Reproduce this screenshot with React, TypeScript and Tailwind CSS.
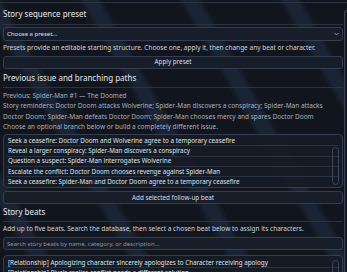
import React from 'react'

const followUps = [
  'Seek a ceasefire: Doctor Doom and Wolverine agree to a temporary ceasefire',
  'Reveal a larger conspiracy: Spider-Man discovers a conspiracy',
  'Question a suspect: Spider-Man interrogates Wolverine',
  'Escalate the conflict: Doctor Doom chooses revenge against Spider-Man',
  'Seek a ceasefire: Spider-Man and Doctor Doom agree to a temporary ceasefire'
]

function Heading({ children }: { children: React.ReactNode }) {
  return (
    <div className="flex h-[19px] items-center border-b border-[#2b3343] text-[8px] text-[#e4e7ee]">
      {children}
    </div>
  )
}

function Button({ children }: { children: React.ReactNode }) {
  return (
    <button className="flex h-[13px] w-full items-center justify-center rounded-[3px] border border-[#343e50] bg-[#181e2a]/95 text-[6.3px] text-[#d8dce4]">
      {children}
    </button>
  )
}

function ScrollPill({ className }: { className: string }) {
  return <div className={`absolute right-[3px] w-[7px] rounded-full border border-[#3d4759] ${className}`} />
}

export default function App() {
  return (
    <div className="h-[272px] w-[347px] overflow-hidden bg-[repeating-linear-gradient(60deg,#11151d_0px,#11151d_30px,#1a2435_36px,#1a2435_46px,#11151d_52px,#11151d_86.6px)] font-['Noto_Sans',sans-serif] leading-none">
      <div className="h-[3px] border-b border-[#2b3343]" />
      <div className="flex">
        <main className="ml-[3px] w-[340px]">
          <div className="flex h-[22px] items-center border-b border-[#2b3343] text-[8px] text-[#e4e7ee]">
            Story sequence preset
          </div>

          <div className="mt-[2px] flex h-[14px] items-center justify-between rounded-[3px] border border-[#343e50] bg-[#181e2a]/95 px-[3px] text-[6px] text-[#dde1e8]">
            <span>Choose a preset...</span>
            <svg width="5" height="4" viewBox="0 0 5 4" className="text-[#aab2c0]">
              <path d="M0.5 1 L2.5 3 L4.5 1" fill="none" stroke="currentColor" strokeWidth="0.8" />
            </svg>
          </div>

          <p className="flex h-[15px] items-center text-[6.5px] text-[#cfd4dc]">
            Presets provide an editable starting structure. Choose one, apply it, then change any beat or character.
          </p>

          <Button>Apply preset</Button>

          <Heading>Previous issue and branching paths</Heading>

          <div className="pt-[3px] text-[6.5px] leading-[10.3px] text-[#a9b0bc]">
            <p>Previous: Spider-Man #1 — The Doomed</p>
            <p>
              Story reminders: Doctor Doom attacks Wolverine; Spider-Man discovers a conspiracy; Spider-Man attacks
              Doctor Doom; Spider-Man defeats Doctor Doom; Spider-Man chooses mercy and spares Doctor Doom
            </p>
            <p>Choose an optional branch below or build a completely different issue.</p>
          </div>

          <div className="relative mt-[2px] h-[54px] overflow-hidden rounded-[4px] border border-[#343e50] bg-[#161b26]/95 px-[3px] pt-[1px]">
            {followUps.map((item) => (
              <div
                key={item}
                className="flex h-[10.3px] items-center border-b border-[#2a3242] pl-[1px] text-[6.3px] text-[#dfe3ea]"
              >
                {item}
              </div>
            ))}
            <ScrollPill className="top-[12px] h-[38px]" />
          </div>

          <div className="mt-[3px]">
            <Button>Add selected follow-up beat</Button>
          </div>

          <div className="mt-[-1px]">
            <Heading>Story beats</Heading>
          </div>

          <p className="flex h-[15px] items-center text-[6.5px] text-[#cfd4dc]">
            Add up to five beats. Search the database, then select a chosen beat below to assign its characters.
          </p>

          <div className="flex h-[13px] items-center rounded-[3px] border border-[#343e50] bg-[#181e2a]/95 px-[3px] text-[6px] text-[#8d95a3]">
            Search story beats by name, category, or description...
          </div>

          <div className="relative mt-[5px] h-[40px] overflow-hidden rounded-[4px] border border-[#343e50] bg-[#161b26]/95 px-[3px] pt-[2px]">
            <div className="flex h-[10.3px] items-center border-b border-[#2a3242] pl-[1px] text-[6.3px] text-[#dfe3ea]">
              [Relationship] Apologizing character sincerely apologizes to Character receiving apology
            </div>
            <div className="flex h-[10.3px] items-center pl-[1px] text-[6.3px] text-[#dfe3ea]">
              [Relationship] Rivals realize conflict needs a different solution
            </div>
            <ScrollPill className="top-[4px] h-[30px]" />
          </div>
        </main>
        <div className="mt-[7px] ml-[1px] h-[300px] flex-1 rounded-tl-[4px] border-t border-l border-[#3a4456] bg-[#141922]" />
      </div>
    </div>
  )
}
